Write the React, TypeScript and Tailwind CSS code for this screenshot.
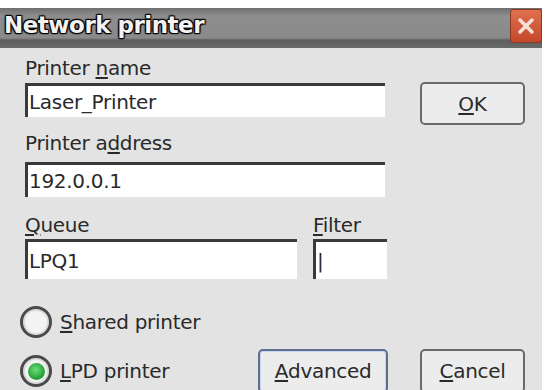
import React from 'react';

const font = "font-['DejaVu_Sans','Liberation_Sans',sans-serif]";

const Field: React.FC<{ value: string; className?: string }> = ({ value, className = '' }) => (
    <div
        className={`bg-white border-t-[3px] border-l-[3px] border-t-[#3a3a3a] border-l-[#3a3a3a] flex items-center pl-[1px] text-[20px] tracking-[-0.3px] text-[#2a2a2a] ${className}`}
    >
        {value}
    </div>
);

const Btn: React.FC<{ children: React.ReactNode; focused?: boolean; className?: string }> = ({
    children,
    focused = false,
    className = '',
}) => (
    <div
        className={`flex items-center justify-center rounded-[5px] border-2 bg-[#ececec] text-[20px] text-[#2a2a2a] ${
            focused ? 'border-[#5b6f8f] shadow-[inset_0_0_0_1px_#c9d6ea]' : 'border-[#6a6a6a]'
        } ${className}`}
    >
        {children}
    </div>
);

const Radio: React.FC<{ checked?: boolean }> = ({ checked = false }) => (
    <div className="w-[32px] h-[32px] rounded-full border-[3px] border-[#4a4a4a] bg-[#f4f4f4] flex items-center justify-center shadow-[inset_0_0_0_2px_#dcdcdc]">
        {checked && (
            <div className="w-[17px] h-[17px] rounded-full bg-[radial-gradient(circle_at_45%_40%,#6fe07a,#1f9a34_70%)]" />
        )}
    </div>
);

export default function App() {
    return (
        <div className={`w-[545px] h-[390px] bg-white overflow-hidden pt-[8px] ${font}`}>
            <div className="w-[542px] h-[400px] flex flex-col">
                {/* title bar */}
                <div className="h-[40px] shrink-0 flex items-stretch bg-[linear-gradient(#6f6f6f,#8e8e8e_20%,#8a8a8a_75%,#5e5e5e_80%,#6a6a6a)]">
                    <div className="flex-1 flex items-center pl-[4px] pb-[5px]">
                        <span className="text-[23px] font-bold tracking-[-0.5px] text-[#f2f2f2] [text-shadow:0_0_2px_#000,1px_1px_1px_#000,-1px_-1px_1px_#000,1px_-1px_1px_#000,-1px_1px_1px_#000]">
                            Network printer
                        </span>
                    </div>
                    <div className="w-[32px] h-[34px] mt-[1px] rounded-[3px] border border-[#8a3a22] bg-[linear-gradient(#e07050,#c4482a)] flex items-center justify-center">
                        <svg width="20" height="20" viewBox="0 0 20 20">
                            <path d="M4 4 L16 16 M16 4 L4 16" stroke="#f8e0d8" strokeWidth="3.5" strokeLinecap="round" />
                        </svg>
                    </div>
                </div>

                {/* body */}
                <div className="flex-1 bg-[#e3e3e3] flex flex-col pl-[25px] pt-[8px] text-[20px] tracking-[-0.3px] text-[#2a2a2a]">
                    <div className="flex">
                        <div className="w-[360px] flex flex-col">
                            <div className="h-[24px] leading-[24px]">
                                Printer <span className="underline underline-offset-2">n</span>ame
                            </div>
                            <Field value="Laser_Printer" className="h-[34px] mt-[3px]" />
                        </div>
                        <Btn className="w-[105px] h-[43px] mt-[26px] ml-[35px]">
                            <span className="underline underline-offset-2">O</span>K
                        </Btn>
                    </div>

                    <div className="h-[24px] leading-[24px] mt-[6px]">
                        Printer a<span className="underline underline-offset-2">d</span>dress
                    </div>
                    <Field value="192.0.0.1" className="w-[360px] h-[35px] mt-[7px]" />

                    <div className="flex mt-[16px]">
                        <div className="w-[272px] flex flex-col">
                            <div className="h-[24px] leading-[24px]">
                                <span className="underline underline-offset-2">Q</span>ueue
                            </div>
                            <Field value="LPQ1" className="h-[40px] mt-[2px]" />
                        </div>
                        <div className="w-[74px] ml-[16px] flex flex-col">
                            <div className="h-[24px] leading-[24px]">
                                <span className="underline underline-offset-2">F</span>ilter
                            </div>
                            <Field value="|" className="h-[40px] mt-[2px]" />
                        </div>
                    </div>

                    <div className="flex items-center gap-[8px] ml-[-5px] mt-[27px]">
                        <Radio />
                        <span>
                            <span className="underline underline-offset-2">S</span>hared printer
                        </span>
                    </div>

                    <div className="flex items-center ml-[-5px] mt-[11px]">
                        <div className="flex items-center gap-[8px] w-[238px]">
                            <Radio checked />
                            <span>
                                <span className="underline underline-offset-2">L</span>PD printer
                            </span>
                        </div>
                        <Btn focused className="w-[130px] h-[44px]">
                            <span className="underline underline-offset-2">A</span>dvanced
                        </Btn>
                        <Btn className="w-[105px] h-[44px] ml-[32px]">
                            <span className="underline underline-offset-2">C</span>ancel
                        </Btn>
                    </div>
                </div>
            </div>
        </div>
    );
}
